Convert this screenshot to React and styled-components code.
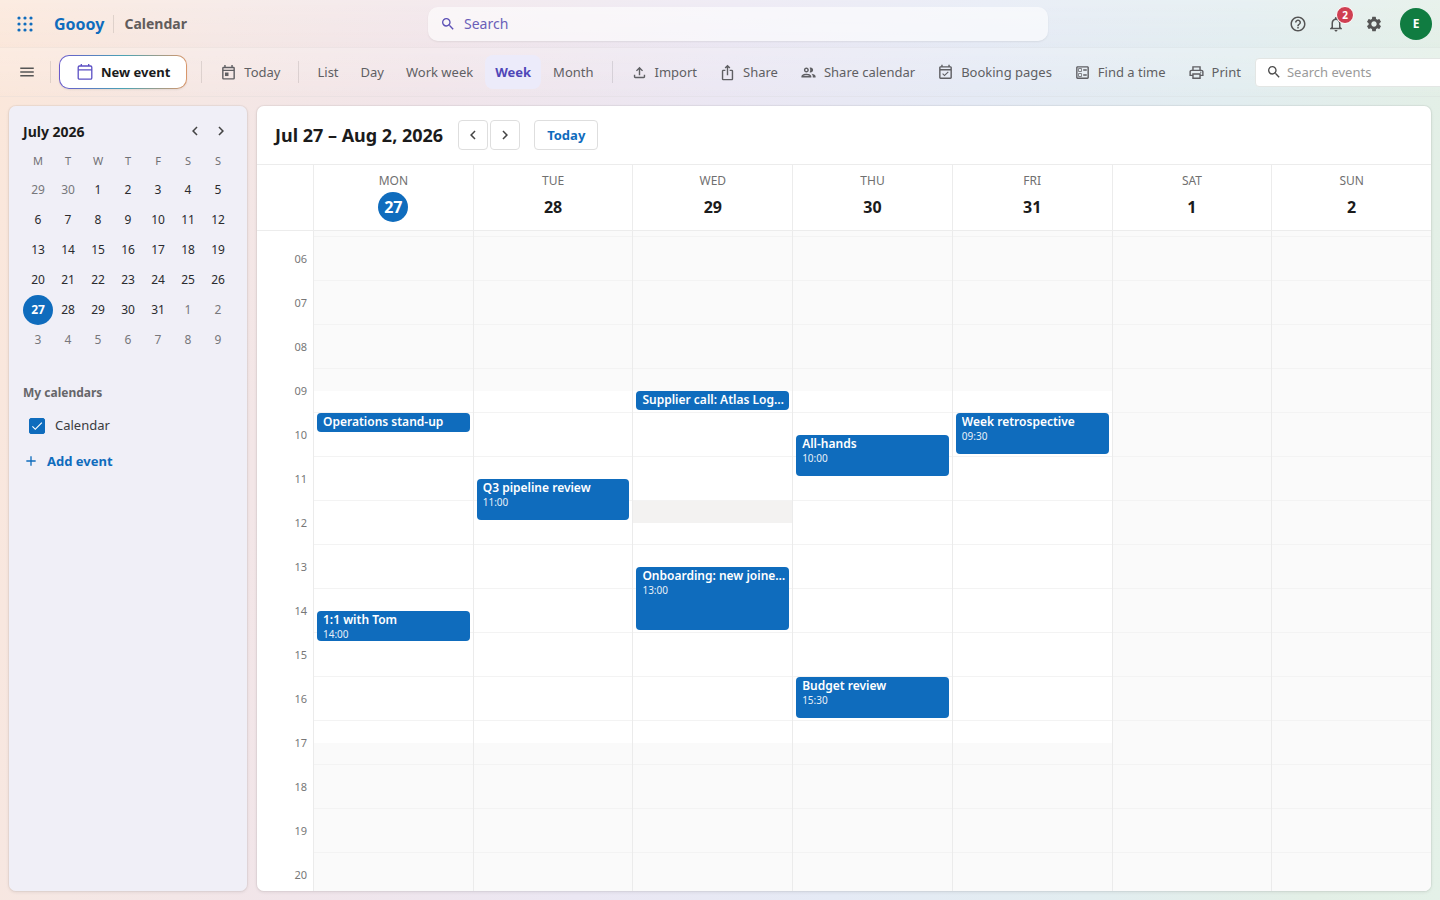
import { useLayoutEffect, useRef, useState } from 'react'
import styled, { createGlobalStyle } from 'styled-components'
import {
  MdAdd,
  MdCheck,
  MdChevronLeft,
  MdChevronRight,
  MdHelpOutline,
  MdIosShare,
  MdMenu,
  MdNotificationsNone,
  MdOutlineBallot,
  MdOutlineEventAvailable,
  MdOutlineFileUpload,
  MdOutlineGroup,
  MdOutlinePrint,
  MdSearch,
  MdSettings,
} from 'react-icons/md'

const GlobalStyle = createGlobalStyle`
  * {
    box-sizing: border-box;
  }
  body {
    margin: 0;
    font-family: 'Noto Sans', 'Open Sans', sans-serif;
    font-size: 13px;
    color: #242424;
  }
  button, input {
    font: inherit;
    color: inherit;
  }
  button {
    padding: 0;
    border: none;
    background: none;
    cursor: pointer;
  }
`

const Page = styled.div`
  height: 100vh;
  display: flex;
  flex-direction: column;
  overflow: hidden;
  background: linear-gradient(
    100deg,
    #fbe7da 0%,
    #f5e7e4 14%,
    #f1e5ea 28%,
    #ebe7f3 46%,
    #e5eaf5 62%,
    #e2edf0 78%,
    #e3efe6 92%,
    #e4f1e8 100%
  );
`

/* top header */
const Header = styled.header`
  height: 48px;
  flex-shrink: 0;
  display: grid;
  grid-template-columns: 35fr minmax(0, 620px) 32fr;
  align-items: center;
  padding: 0 8px;
  border-bottom: 1px solid rgba(0, 0, 0, .03);
  background: linear-gradient(rgba(255, 255, 255, .2), rgba(255, 255, 255, 0));
`
const BrandGroup = styled.div`
  display: flex;
  align-items: center;
  padding-left: 8px;
`
const AppsButton = styled.button`
  display: flex;
  color: #0f6cbd;
`
const Brand = styled.a`
  margin-left: 20px;
  font-size: 16px;
  font-weight: 700;
  color: #0f6cbd;
  text-decoration: none;
`
const AppName = styled.span`
  margin-left: 9px;
  padding-left: 10px;
  border-left: 1px solid rgba(0, 0, 0, .1);
  font-size: 14px;
  line-height: 18px;
  font-weight: 700;
  color: #615c5c;
`
const SearchBox = styled.label`
  height: 34px;
  display: flex;
  align-items: center;
  gap: 8px;
  padding: 0 12px;
  border-radius: 10px;
  color: #5b4fb5;
  background: rgba(255, 255, 255, .6);
  box-shadow: 0 1px 2px rgba(0, 0, 0, .07);
`
const SearchInput = styled.input`
  flex: 1;
  min-width: 0;
  padding: 0;
  border: none;
  outline: none;
  background: none;
  font-size: ${props => props.$size || 13}px;
  &::placeholder {
    color: ${props => props.$hint};
    opacity: 1;
  }
`
const HeaderActions = styled.div`
  display: flex;
  align-items: center;
  justify-content: flex-end;
  gap: 2px;
`
const IconButton = styled.button`
  position: relative;
  width: 36px;
  height: 36px;
  display: flex;
  align-items: center;
  justify-content: center;
  color: #555;
`
const Badge = styled.span`
  position: absolute;
  top: 0;
  right: 0;
  width: 18px;
  height: 18px;
  border: 1px solid #fff;
  border-radius: 50%;
  background: #cf3f52;
  color: #fff;
  font-size: 10px;
  line-height: 16px;
  font-weight: 700;
`
const Avatar = styled.button`
  width: 32px;
  height: 32px;
  margin-left: 6px;
  border-radius: 50%;
  background: #107c41;
  color: #fff;
  font-size: 12px;
  font-weight: 700;
`

/* command bar */
const Toolbar = styled.nav`
  height: 49px;
  flex-shrink: 0;
  display: flex;
  align-items: center;
  padding-left: 8px;
  border-bottom: 1px solid rgba(0, 0, 0, .04);
  background: linear-gradient(rgba(255, 255, 255, .2), rgba(255, 255, 255, 0));
`
const MenuButton = styled(IconButton)`
  width: 38px;
  flex-shrink: 0;
`
const Divider = styled.span`
  flex-shrink: 0;
  width: 1px;
  height: 22px;
  margin: 0 ${props => props.$right}px 0 ${props => props.$left}px;
  background: rgba(0, 0, 0, .1);
`
const NewEvent = styled.button`
  flex-shrink: 0;
  height: 34px;
  display: flex;
  align-items: center;
  gap: 7px;
  padding: 0 16px;
  border: 1px solid transparent;
  border-radius: 10px;
  background:
    linear-gradient(#fff, #fff) padding-box,
    linear-gradient(90deg, #6a5acd, #4aa3b5 50%, #d9976b) border-box;
  box-shadow: 0 1px 2px rgba(0, 0, 0, .08);
  color: #1b1b1b;
  font-weight: 700;
`
const ToolButton = styled.button`
  flex-shrink: 0;
  height: 34px;
  display: flex;
  align-items: center;
  gap: 7px;
  padding: 0 12px 0 10px;
  color: #5f5f63;
  white-space: nowrap;
`
const ViewButton = styled(ToolButton)`
  margin-right: 2px;
  padding: 0 10px;
  border-radius: 8px;
  ${props => props.$active && `
    color: #4f46b8;
    font-weight: 700;
    background: #ecebfa;
  `}
`
const EventSearch = styled.label`
  flex-shrink: 0;
  width: 220px;
  height: 29px;
  display: flex;
  align-items: center;
  gap: 5px;
  margin-left: 2px;
  padding: 0 10px;
  border: 1px solid #e3e6e4;
  border-radius: 4px;
  background: #fff;
  color: #4a4a4a;
`

/* body */
const Content = styled.div`
  flex: 1;
  min-height: 0;
  display: flex;
  gap: 8px;
  padding: 8px;
`
const Sidebar = styled.aside`
  width: 240px;
  flex-shrink: 0;
  padding: 13px 13px 14px 14px;
  border: 1px solid rgba(0, 0, 0, .04);
  border-radius: 8px;
  background: #f0eff7;
  background-clip: padding-box;
  box-shadow: 0 1px 3px rgba(0, 0, 0, .06);
`
const MonthHeader = styled.div`
  height: 24px;
  display: flex;
  align-items: center;
`
const MonthTitle = styled.h2`
  flex: 1;
  margin: 0;
  font-size: 14px;
  font-weight: 700;
  color: #1b1b1b;
`
const MonthNav = styled.button`
  width: 26px;
  height: 24px;
  display: flex;
  align-items: center;
  justify-content: center;
  color: #444;
`
const MiniTable = styled.table`
  border-collapse: collapse;
  th {
    height: 32px;
    padding: 2px 0 0;
    font-size: 11px;
    font-weight: 400;
    color: #707074;
  }
  td {
    padding: 0;
  }
`
const MiniDay = styled.button`
  display: block;
  width: 30px;
  height: 30px;
  padding-bottom: 2px;
  border-radius: 50%;
  font-size: 12px;
  color: ${props => (props.$muted ? '#77777b' : '#2b2b2e')};
  ${props => props.$selected && `
    background: #0f6cbd;
    color: #fff;
    font-weight: 700;
  `}
`
const SectionTitle = styled.h3`
  margin: 28px 0 0;
  font-size: 12px;
  line-height: 20px;
  font-weight: 700;
  color: #66666a;
`
const CalendarItem = styled.label`
  height: 32px;
  display: flex;
  align-items: center;
  gap: 10px;
  margin-top: 7px;
  padding-left: 6px;
  color: #3b3b3e;
`
const CalendarName = styled.span`
  padding-bottom: 2px;
`
const Tick = styled.span`
  position: relative;
  display: flex;
  svg {
    position: absolute;
    inset: 1px;
    color: #fff;
    pointer-events: none;
  }
`
const TickInput = styled.input`
  appearance: none;
  width: 16px;
  height: 16px;
  margin: 0;
  border: 1px solid #0f6cbd;
  border-radius: 2px;
  &:checked {
    background: #0f6cbd;
  }
`
const AddEvent = styled.button`
  height: 32px;
  display: flex;
  align-items: center;
  gap: 8px;
  margin-top: 3px;
  font-weight: 700;
  color: #0f6cbd;
`
const Main = styled.main`
  flex: 1;
  min-width: 0;
  display: flex;
  flex-direction: column;
  overflow: hidden;
  border: 1px solid rgba(0, 0, 0, .04);
  border-radius: 8px;
  background: #fff;
  background-clip: padding-box;
  box-shadow: 0 1px 3px rgba(0, 0, 0, .06);
`
const TitleBar = styled.div`
  height: 59px;
  flex-shrink: 0;
  display: flex;
  align-items: center;
  padding: 0 18px;
  border-bottom: 1px solid #ececec;
`
const RangeTitle = styled.h1`
  margin: 0 15px 0 0;
  font-size: 18px;
  line-height: 24px;
  font-weight: 700;
  color: #1b1b1b;
`
const OutlineButton = styled.button`
  min-width: 30px;
  height: 30px;
  display: flex;
  align-items: center;
  justify-content: center;
  margin-right: 2px;
  border: 1px solid #dedede;
  border-radius: 4px;
  color: #444;
`
const TodayButton = styled(OutlineButton)`
  margin-left: 12px;
  padding: 0 12px;
  font-weight: 700;
  color: #0f6cbd;
`
const WeekGrid = styled.div`
  display: grid;
  grid-template-columns: 56px repeat(7, minmax(0, 1fr));
`
const DayHeads = styled(WeekGrid)`
  height: 66px;
  flex-shrink: 0;
  border-bottom: 1px solid #ececec;
`
const DayHead = styled.div`
  display: flex;
  flex-direction: column;
  align-items: center;
  padding-top: 7px;
  border-left: 1px solid #ececec;
`
const DayName = styled.span`
  font-size: 12px;
  line-height: 18px;
  color: #707070;
`
const DayNumber = styled.span`
  width: 30px;
  height: 30px;
  margin-top: 2px;
  border-radius: 50%;
  font-size: 16px;
  line-height: 30px;
  font-weight: 700;
  text-align: center;
  color: ${props => (props.$today ? '#fff' : '#1b1b1b')};
  background: ${props => (props.$today ? '#0f6cbd' : 'none')};
`
const Scroller = styled.div`
  flex: 1;
  min-height: 0;
  overflow-y: auto;
  scrollbar-width: none;
`
const Hours = styled.div`
  padding-top: 22px;
`
const Hour = styled.div`
  height: 44px;
  padding-right: 6px;
  font-size: 11px;
  line-height: 44px;
  text-align: right;
  color: #777;
`
/* one row per quarter of an hour */
const DayColumn = styled.div`
  display: grid;
  grid-template-columns: minmax(0, 1fr);
  grid-template-rows: repeat(96, 11px);
  border-left: 1px solid #ebebeb;
  background:
    repeating-linear-gradient(transparent 0 21px, #f3f3f3 21px 22px, transparent 22px 44px),
    ${props => (props.$weekend
      ? '#fafafa'
      : 'linear-gradient(#fafafa 396px, #fff 396px 748px, #fafafa 748px)')};
`
const HoverSlot = styled.div`
  grid-row: ${props => props.$row} / span 2;
  background: #f3f2f1;
`
const EventCard = styled.button`
  grid-row: ${props => props.$row} / span ${props => props.$span};
  display: flex;
  flex-direction: column;
  margin: 0 3px 3px;
  padding: 1px 3px 0 6px;
  overflow: hidden;
  border-radius: 4px;
  background: #0f6cbd;
  color: #fff;
  text-align: left;
`
const EventTitle = styled.span`
  flex-shrink: 0;
  max-width: 100%;
  overflow: hidden;
  text-overflow: ellipsis;
  white-space: nowrap;
  font-size: 12px;
  line-height: 15px;
  font-weight: 600;
`
const EventTime = styled.span`
  font-size: 10px;
  line-height: 14px;
  opacity: .9;
`

const views = ['List', 'Day', 'Work week', 'Week', 'Month']

const tools = [
  { label: 'Import', Icon: MdOutlineFileUpload },
  { label: 'Share', Icon: MdIosShare },
  { label: 'Share calendar', Icon: MdOutlineGroup },
  { label: 'Booking pages', Icon: MdOutlineEventAvailable },
  { label: 'Find a time', Icon: MdOutlineBallot },
  { label: 'Print', Icon: MdOutlinePrint },
]

const monthRows = [
  [29, 30, 1, 2, 3, 4, 5],
  [6, 7, 8, 9, 10, 11, 12],
  [13, 14, 15, 16, 17, 18, 19],
  [20, 21, 22, 23, 24, 25, 26],
  [27, 28, 29, 30, 31, 1, 2],
  [3, 4, 5, 6, 7, 8, 9],
]

const days = [
  {
    name: 'MON',
    date: 27,
    today: true,
    events: [
      { title: 'Operations stand-up', time: '09:30', length: 30 },
      { title: '1:1 with Tom', time: '14:00', length: 45 },
    ],
  },
  { name: 'TUE', date: 28, events: [{ title: 'Q3 pipeline review', time: '11:00', length: 60 }] },
  {
    name: 'WED',
    date: 29,
    hover: '11:30',
    events: [
      { title: 'Supplier call: Atlas Logistics', time: '09:00', length: 30 },
      { title: 'Onboarding: new joiners session', time: '13:00', length: 90 },
    ],
  },
  {
    name: 'THU',
    date: 30,
    events: [
      { title: 'All-hands', time: '10:00', length: 60 },
      { title: 'Budget review', time: '15:30', length: 60 },
    ],
  },
  { name: 'FRI', date: 31, events: [{ title: 'Week retrospective', time: '09:30', length: 60 }] },
  { name: 'SAT', date: 1, weekend: true, events: [] },
  { name: 'SUN', date: 2, weekend: true, events: [] },
]

const hours = Array.from({ length: 23 }, (_, i) => String(i + 1).padStart(2, '0'))

const toRow = time => {
  const [h, m] = time.split(':').map(Number)
  return h * 4 + m / 15 + 1
}

const isOutside = (row, date) => (row === 0 && date > 7) || (row > 3 && date < 15)

const AppsIcon = () => (
  <svg width='18' height='18' viewBox='0 0 18 18' fill='currentColor' aria-hidden='true'>
    {[3, 9, 15].map(y => [3, 9, 15].map(x => <circle key={`${x}-${y}`} cx={x} cy={y} r='1.6' />))}
  </svg>
)

const NewEventIcon = () => (
  <svg width='18' height='18' viewBox='0 0 18 18' fill='none' stroke='#5b4fc4' strokeWidth='1.3' aria-hidden='true'>
    <rect x='2.2' y='3' width='13.6' height='13.2' rx='1.3' />
    <path d='M2.2 6.9h13.6M5.3 1v2M12.7 1v2' />
  </svg>
)

const TodayIcon = () => (
  <svg width='17' height='17' viewBox='0 0 24 24' fill='none' stroke='currentColor' strokeWidth='2' aria-hidden='true'>
    <rect x='4' y='5' width='16' height='16' rx='1' />
    <path d='M4 9h16M7 1.5V5M17 1.5V5' />
    <path d='M7 12h5v5H7z' fill='currentColor' stroke='none' />
  </svg>
)

export default function App() {
  const [view, setView] = useState('Week')
  const [shown, setShown] = useState(true)
  const scroller = useRef(null)

  // open the week a little after five in the morning
  useLayoutEffect(() => {
    scroller.current.scrollTop = 236
  }, [])

  return (
    <Page>
      <GlobalStyle />
      <Header>
        <BrandGroup>
          <AppsButton aria-label='Apps'><AppsIcon /></AppsButton>
          <Brand href='#'>Goooy</Brand>
          <AppName>Calendar</AppName>
        </BrandGroup>
        <SearchBox>
          <MdSearch size={16} />
          <SearchInput type='text' placeholder='Search' aria-label='Search' $hint='#6a5fb8' $size={14} />
        </SearchBox>
        <HeaderActions>
          <IconButton aria-label='Help'><MdHelpOutline size={18} /></IconButton>
          <IconButton aria-label='Notifications'>
            <MdNotificationsNone size={18} />
            <Badge>2</Badge>
          </IconButton>
          <IconButton aria-label='Settings'><MdSettings size={18} /></IconButton>
          <Avatar>E</Avatar>
        </HeaderActions>
      </Header>

      <Toolbar>
        <MenuButton aria-label='Menu'><MdMenu size={18} /></MenuButton>
        <Divider $left={4} $right={8} />
        <NewEvent><NewEventIcon />New event</NewEvent>
        <Divider $left={14} $right={8} />
        <ToolButton><TodayIcon />Today</ToolButton>
        <Divider $left={6} $right={8} />
        {views.map(name => (
          <ViewButton key={name} $active={name === view} onClick={() => setView(name)}>{name}</ViewButton>
        ))}
        <Divider $left={6} $right={8} />
        {tools.map(({ label, Icon }) => (
          <ToolButton key={label}><Icon size={17} />{label}</ToolButton>
        ))}
        <EventSearch>
          <MdSearch size={16} />
          <SearchInput type='text' placeholder='Search events' aria-label='Search events' $hint='#9a9a9a' />
        </EventSearch>
      </Toolbar>

      <Content>
        <Sidebar>
          <MonthHeader>
            <MonthTitle>July 2026</MonthTitle>
            <MonthNav aria-label='Previous month'><MdChevronLeft size={18} /></MonthNav>
            <MonthNav aria-label='Next month'><MdChevronRight size={18} /></MonthNav>
          </MonthHeader>
          <MiniTable>
            <thead>
              <tr>{['M', 'T', 'W', 'T', 'F', 'S', 'S'].map((d, i) => <th key={i}>{d}</th>)}</tr>
            </thead>
            <tbody>
              {monthRows.map((row, r) => (
                <tr key={r}>
                  {row.map(date => (
                    <td key={date}>
                      <MiniDay $muted={isOutside(r, date)} $selected={r === 4 && date === 27}>{date}</MiniDay>
                    </td>
                  ))}
                </tr>
              ))}
            </tbody>
          </MiniTable>
          <SectionTitle>My calendars</SectionTitle>
          <CalendarItem>
            <Tick>
              <TickInput type='checkbox' checked={shown} onChange={() => setShown(!shown)} />
              {shown && <MdCheck size={14} />}
            </Tick>
            <CalendarName>Calendar</CalendarName>
          </CalendarItem>
          <AddEvent><MdAdd size={16} />Add event</AddEvent>
        </Sidebar>

        <Main>
          <TitleBar>
            <RangeTitle>Jul 27 – Aug 2, 2026</RangeTitle>
            <OutlineButton aria-label='Previous week'><MdChevronLeft size={18} /></OutlineButton>
            <OutlineButton aria-label='Next week'><MdChevronRight size={18} /></OutlineButton>
            <TodayButton>Today</TodayButton>
          </TitleBar>
          <DayHeads>
            <span />
            {days.map(day => (
              <DayHead key={day.name}>
                <DayName>{day.name}</DayName>
                <DayNumber $today={day.today}>{day.date}</DayNumber>
              </DayHead>
            ))}
          </DayHeads>
          <Scroller ref={scroller}>
            <WeekGrid>
              <Hours>
                {hours.map(hour => <Hour key={hour}>{hour}</Hour>)}
              </Hours>
              {days.map(day => (
                <DayColumn key={day.name} $weekend={day.weekend}>
                  {day.hover && <HoverSlot $row={toRow(day.hover)} />}
                  {day.events.map(event => (
                    <EventCard key={event.title} $row={toRow(event.time)} $span={event.length / 15}>
                      <EventTitle>{event.title}</EventTitle>
                      {event.length > 30 && <EventTime>{event.time}</EventTime>}
                    </EventCard>
                  ))}
                </DayColumn>
              ))}
            </WeekGrid>
          </Scroller>
        </Main>
      </Content>
    </Page>
  )
}
